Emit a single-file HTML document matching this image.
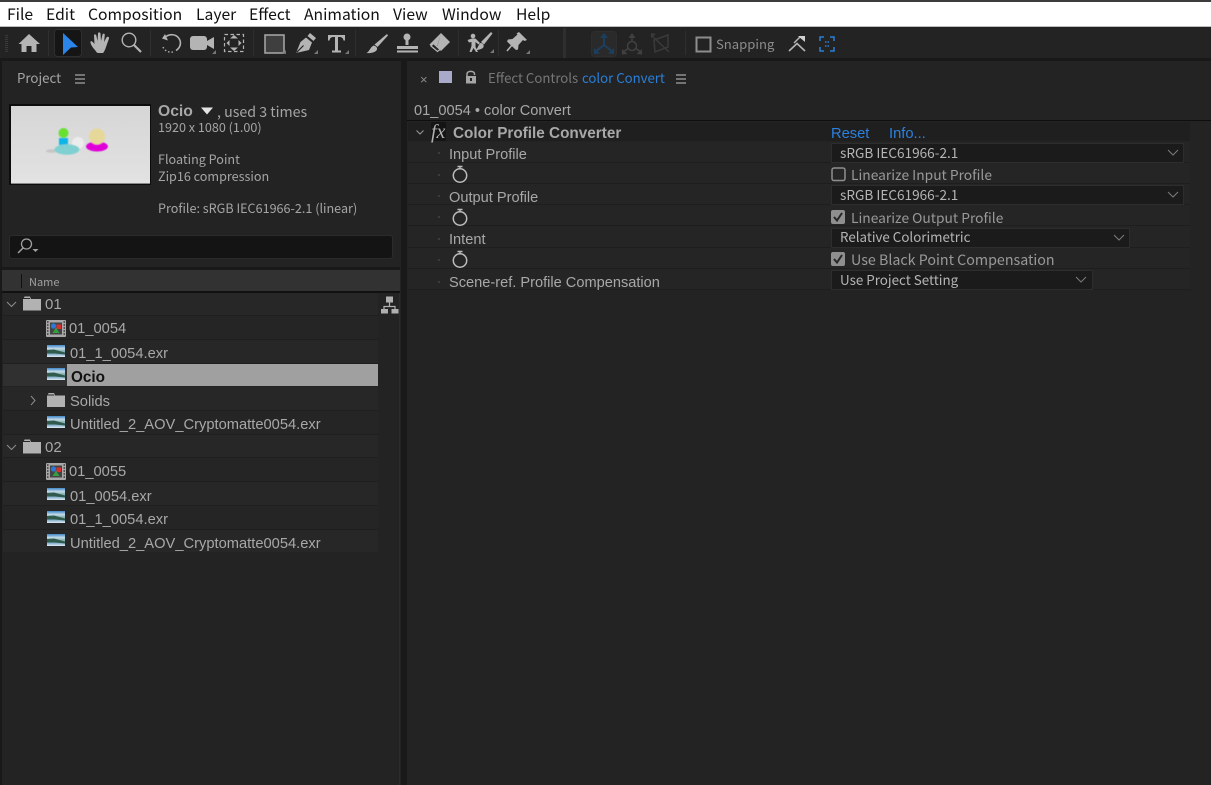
<!DOCTYPE html>
<html><head><meta charset="utf-8"><style>
html,body{margin:0;padding:0;background:#232323;width:1211px;height:785px;overflow:hidden}
div,span{position:absolute;white-space:nowrap}
.n{font-family:"Noto Sans CJK SC","Liberation Sans",sans-serif}
.l{font-family:"Liberation Sans","Noto Sans CJK SC",sans-serif}
.m{top:1px;height:24px;line-height:25px;font-size:15.7px;color:#111;font-family:"Noto Sans CJK SC","Liberation Sans",sans-serif}
.i{font-size:12.6px;color:#a5a5a5;height:16px;line-height:16px;font-family:"Noto Sans CJK SC","Liberation Sans",sans-serif}
.r{left:3px;width:375px;background:#272727;border-bottom:1px solid #1f1f1f}
.t{font-family:"Liberation Sans",sans-serif;font-size:14.7px;color:#a8a8a8;height:20px;line-height:20px}
.e{left:408px;width:782px;background:#252525;border-bottom:1px solid #1e1e1e}
.p{left:449px;font-family:"Liberation Sans",sans-serif;font-size:14.6px;color:#a8a8a8;height:20px;line-height:20px}
.d{left:831px;background:#1b1b1b;border:1px solid #2d2d2d;box-sizing:border-box;height:20px}
.dt{left:840px;font-family:"Noto Sans CJK SC","Liberation Sans",sans-serif;font-size:13.6px;color:#b5b5b5;height:18px;line-height:18px}
.c{left:851px;font-family:"Noto Sans CJK SC","Liberation Sans",sans-serif;font-size:13.8px;color:#999;height:20px;line-height:20px}
</style></head><body>
<div style="left:0;top:0;width:1211px;height:2px;background:#3c3c3c"></div>
<div style="left:0;top:2px;width:1211px;height:24px;background:#fff"></div>
<div style="left:0;top:26px;width:1211px;height:1px;background:#bdbdbd"></div>
<div style="left:0;top:27px;width:1211px;height:31px;background:#232323"></div>
<div style="left:0;top:58px;width:1211px;height:3px;background:#191919"></div>
<div style="left:0;top:61px;width:2px;height:724px;background:#191919"></div>
<div style="left:401px;top:61px;width:6px;height:724px;background:#191919"></div>

<span class="m" style="left:7px">File</span>
<span class="m" style="left:46px">Edit</span>
<span class="m" style="left:88px">Composition</span>
<span class="m" style="left:196px">Layer</span>
<span class="m" style="left:249px">Effect</span>
<span class="m" style="left:304px">Animation</span>
<span class="m" style="left:393px">View</span>
<span class="m" style="left:442px">Window</span>
<span class="m" style="left:516px">Help</span>

<!-- project -->
<span class="n" style="left:17px;top:68px;font-size:13.3px;line-height:20px;color:#a5a5a5">Project</span>
<span class="l" style="left:158px;top:103px;font-size:15.7px;line-height:18px;font-weight:bold;color:#a8a8a8">Ocio</span>
<span class="n" style="left:217px;top:103px;font-size:14.2px;line-height:18px;color:#a5a5a5">, used 3 times</span>
<span class="i" style="left:158px;top:119px">1920 x 1080 (1.00)</span>
<span class="i" style="left:158px;top:151px">Floating Point</span>
<span class="i" style="left:158px;top:168px">Zip16 compression</span>
<span class="i" style="left:158px;top:200px">Profile: sRGB IEC61966-2.1 (linear)</span>

<div style="left:9px;top:235px;width:384px;height:24px;background:#141414;border:1px solid #2b2b2b;border-radius:3px;box-sizing:border-box"></div>
<div style="left:2px;top:267px;width:398px;height:3px;background:#191919"></div>
<div style="left:2px;top:270px;width:398px;height:21px;background:#323232"></div>
<div style="left:2px;top:291px;width:398px;height:2px;background:#111"></div>
<div style="left:21px;top:274px;width:1px;height:14px;background:#111"></div>
<span class="n" style="left:29px;top:274px;font-size:11px;line-height:16px;color:#a0a0a0">Name</span>

<div class="r" style="top:293px;height:22px"></div>
<div class="r" style="top:316px;height:23px;background:#252525"></div>
<div class="r" style="top:340px;height:23px"></div>
<div style="left:3px;top:364px;width:64px;height:22px;background:#303030"></div>
<div style="left:67px;top:364px;width:311px;height:22px;background:#a0a0a0"></div>
<div class="r" style="top:387px;height:23px"></div>
<div class="r" style="top:411px;height:23px;background:#252525"></div>
<div class="r" style="top:435px;height:22px"></div>
<div class="r" style="top:458px;height:23px;background:#252525"></div>
<div class="r" style="top:482px;height:23px"></div>
<div class="r" style="top:506px;height:23px;background:#252525"></div>
<div class="r" style="top:530px;height:22px;border-bottom:0"></div>
<div style="left:399px;top:293px;width:1px;height:492px;background:#2c2c2c"></div>

<span class="t" style="left:45px;top:295px;font-size:15px">01</span>
<span class="t" style="left:69px;top:319px">01_0054</span>
<span class="t" style="left:70px;top:344px">01_1_0054.exr</span>
<span class="t" style="left:71px;top:368px;font-weight:bold;color:#111;font-size:15.3px">Ocio</span>
<span class="t" style="left:70px;top:392px">Solids</span>
<span class="t" style="left:70px;top:415px">Untitled_2_AOV_Cryptomatte0054.exr</span>
<span class="t" style="left:45px;top:438px;font-size:15px">02</span>
<span class="t" style="left:69px;top:462px">01_0055</span>
<span class="t" style="left:70px;top:487px">01_0054.exr</span>
<span class="t" style="left:70px;top:510px">01_1_0054.exr</span>
<span class="t" style="left:70px;top:534px">Untitled_2_AOV_Cryptomatte0054.exr</span>

<!-- effect controls header -->
<span style="left:420px;top:72px;font:13px/15px 'Liberation Sans',sans-serif;color:#8a8a8a">×</span>
<div style="left:439px;top:71px;width:13px;height:12px;background:#a9a9c9"></div>
<span class="n" style="left:488px;top:68px;font-size:13.2px;line-height:20px;color:#777">Effect Controls</span>
<span class="n" style="left:582px;top:68px;font-size:13.2px;line-height:20px;color:#2a7fd8">color Convert</span>
<span class="l" style="left:414px;top:102px;font-size:14.6px;line-height:18px;color:#a8a8a8">01_0054 • color Convert</span>
<div style="left:407px;top:120px;width:804px;height:1px;background:#0e0e0e"></div>

<div class="e" style="top:122px;height:19px;background:#1f1f1f;border:0"></div>
<div class="e" style="top:142px;height:20px"></div>
<div class="e" style="top:163px;height:20px"></div>
<div class="e" style="top:184px;height:20px"></div>
<div class="e" style="top:205px;height:20px"></div>
<div class="e" style="top:226px;height:21px"></div>
<div class="e" style="top:248px;height:20px"></div>
<div class="e" style="top:269px;height:20px"></div>

<div style="left:431px;top:122px;width:15px;height:19px;background:#141414"></div>
<span style="left:431px;top:122px;font:italic 20px/20px 'Liberation Serif',serif;color:#b0b0b0">fx</span>
<span class="l" style="left:453px;top:124px;font-size:15.3px;line-height:20px;font-weight:bold;color:#a8a8a8">Color Profile Converter</span>
<span class="l" style="left:831px;top:124px;font-size:14.7px;line-height:20px;color:#2b80e0">Reset</span>
<span class="l" style="left:889px;top:124px;font-size:14.7px;line-height:20px;color:#2b80e0">Info...</span>

<span class="p" style="top:145px">Input Profile</span>
<span class="p" style="top:188px">Output Profile</span>
<span class="p" style="top:230px">Intent</span>
<span class="p" style="top:273px">Scene-ref. Profile Compensation</span>

<div class="d" style="top:143px;width:353px"></div><span class="dt" style="top:143px">sRGB IEC61966-2.1</span>
<div class="d" style="top:185px;width:353px"></div><span class="dt" style="top:185px">sRGB IEC61966-2.1</span>
<div class="d" style="top:228px;width:299px"></div><span class="dt" style="top:228px;font-size:13.35px">Relative Colorimetric</span>
<div class="d" style="top:270px;width:262px"></div><span class="dt" style="top:270px;font-size:13.4px">Use Project Setting</span>

<span class="c" style="top:164px">Linearize Input Profile</span>
<span class="c" style="top:207px">Linearize Output Profile</span>
<span class="c" style="top:250px;font-size:14.25px">Use Black Point Compensation</span>

<span class="n" style="left:716px;top:33px;font-size:13.1px;line-height:21px;color:#8c8c8c">Snapping</span>

<svg style="position:absolute;left:0;top:0" width="1211" height="785" viewBox="0 0 1211 785">
<defs>
<linearGradient id="sky" x1="0" y1="0" x2="0" y2="1">
<stop offset="0" stop-color="#3f86c8"/><stop offset=".3" stop-color="#c4dcea"/><stop offset=".5" stop-color="#8ab0b0"/><stop offset=".72" stop-color="#7aa8c8"/><stop offset="1" stop-color="#dfeaf2"/>
</linearGradient>
<linearGradient id="tb" x1="0" y1="0" x2="0" y2="1"><stop offset="0" stop-color="#d6d6d6"/><stop offset="1" stop-color="#e2e2e2"/></linearGradient>
<filter id="bl" x="-20%" y="-20%" width="140%" height="140%"><feGaussianBlur stdDeviation=".4"/></filter>
<symbol id="foot" viewBox="0 0 18 12" width="18" height="12"><rect width="18" height="12" fill="url(#sky)"/><path d="M0 5L7 4.500L18 7.500V9.500L8 8.500H0Z" fill="#2f5a4c"/></symbol>
<symbol id="folder" viewBox="0 0 18 14" width="18" height="14"><path d="M0 2.500V14H18V2.500H8L7 0H1.500L1 1.500H7V2.500Z" fill="#b2b2b2"/></symbol>
<symbol id="comp" viewBox="0 0 20 17" width="20" height="17"><rect width="20" height="17" rx="1" fill="#a8a8a8"/><rect x="4" y="2.500" width="12" height="12" fill="#444"/><path d="M1 2h1.500M1 5h1.500M1 8h1.500M1 11h1.500M1 14h1.500M17.500 2H19M17.500 5H19M17.500 8H19M17.500 11H19M17.500 14H19" stroke="#222" stroke-width="1.200"/><circle cx="7.500" cy="6" r="2.600" fill="#2a78d8"/><rect x="10.500" y="4.500" width="4.500" height="4.500" fill="#d83030"/><path d="M10 7.500L13.500 13H6.500Z" fill="#30a040"/></symbol>
<symbol id="watch" viewBox="0 0 18 19" width="18" height="19"><circle cx="9" cy="10.500" r="6.700" fill="none" stroke="#bcbcbc" stroke-width="1.500"/><path d="M6.500 1.500H11.500M9 1.500V4" stroke="#bcbcbc" stroke-width="1.400"/></symbol>
<symbol id="cb" viewBox="0 0 14 14" width="14" height="14"><rect width="14" height="14" rx="2" fill="#8f8f8f"/></symbol>
</defs>

<!-- grip -->
<path d="M6.500 35V52" stroke="#3a3a3a" stroke-width="3" stroke-dasharray="1 1"/>
<!-- separators -->
<g fill="#2f2f2f"><rect x="48" y="30" width="1" height="26"/><rect x="150" y="30" width="1" height="26"/><rect x="253" y="30" width="1" height="26"/><rect x="355" y="30" width="1" height="26"/><rect x="458" y="30" width="1" height="26"/><rect x="498" y="30" width="1" height="26"/><rect x="563" y="28" width="3" height="30"/><rect x="685" y="31" width="1" height="24"/></g>
<!-- home -->
<path d="M29 34L40 44H36.500V52H31.500V46H26.500V52H21.500V44H18.500Z" fill="#b4b4b4"/>
<!-- selection -->
<rect x="54.500" y="29.500" width="27" height="27" rx="3" fill="#151515" stroke="#2f2f2f"/>
<path d="M63 33L78 47L71 47.500L63 55Z" fill="#2b85e8"/>
<!-- hand -->
<path d="M95 50C92 47 90 43 90.500 41.500C91.500 40.500 93 42 94.500 44L94 35.500C94 34 96 34 96.300 35.500L97.500 41L98 33.500C98 32 100.300 32 100.500 33.500L101 41L102.500 34.500C103 33 105 33.500 104.800 35L104 42L106.500 37.500C107.500 36 109.500 37 109 38.500L106 47C105 50 104 52 103 53H98C97 53 96 51.500 95 50Z" fill="#b4b4b4"/>
<!-- zoom -->
<circle cx="129" cy="40" r="6.800" fill="none" stroke="#b4b4b4" stroke-width="1.400"/><path d="M134 45L141 52" stroke="#b4b4b4" stroke-width="2.200"/>
<!-- rotate -->
<path d="M165 34L162 38.500L168 40.500Z" fill="#b4b4b4"/><path d="M165 37.500C169 33.500 176 33.800 179 38.500C182 43 180 48 176 50.500" fill="none" stroke="#b4b4b4" stroke-width="1.600"/><path d="M173 52C168 53 164 50 162.500 46" fill="none" stroke="#b4b4b4" stroke-width="1.400" stroke-dasharray="1.500 2"/>
<!-- camera -->
<rect x="190" y="36" width="17" height="14" rx="3" fill="#b4b4b4"/><path d="M207 41L214 37V49L207 45Z" fill="#b4b4b4"/><path d="M216 50V54H212Z" fill="#777"/>
<!-- pan behind -->
<rect x="224.500" y="34.500" width="19" height="17" fill="none" stroke="#b4b4b4" stroke-width="1.200" stroke-dasharray="3.500 2.500"/><path d="M234 35L238 38.500H230ZM234 51L238 47.500H230ZM226.500 43L229.500 40V46ZM241.500 43L238.500 40V46Z" fill="#b4b4b4"/>
<!-- rect -->
<rect x="265" y="35" width="19" height="18" fill="#3f3f3f" stroke="#aaa" stroke-width="1.500"/><path d="M286 50V54H282Z" fill="#777"/>
<!-- pen -->
<path d="M310 33L316 38L313.500 41L307.500 36Z" fill="#b4b4b4"/><path d="M306 37.500L312 42.500L309 50L296 53L300.500 42Z" fill="#b4b4b4"/><path d="M296.500 52.500L303.500 45.500" stroke="#232323" stroke-width="1.200"/><path d="M318 50V54H314Z" fill="#777"/>
<!-- type -->
<path d="M328 35H345V40.500H343.500C343 38 342 37 339.500 37H338V50.500H341V52.500H332V50.500H335V37H333.500C331 37 330 38 329.500 40.500H328Z" fill="#b4b4b4"/><path d="M349 50V54H345Z" fill="#777"/>
<!-- brush -->
<path d="M387 34L388 35.500L377.500 47L374.500 44.500Z" fill="#b4b4b4"/><path d="M373.500 45.500C376 46 377.500 47.500 377 49.500C376 52.500 370 53.500 366.500 53C369.500 51.500 370 47.500 373.500 45.500Z" fill="#b4b4b4"/>
<!-- stamp -->
<circle cx="407" cy="37" r="3.500" fill="#b4b4b4"/><rect x="405.500" y="39" width="3" height="6" fill="#b4b4b4"/><path d="M397 46H418V49H397Z" fill="#b4b4b4"/><rect x="397" y="50.500" width="21" height="2" fill="#b4b4b4"/>
<!-- eraser -->
<path d="M441 33L450 42L441 51L437 47Z M441 33L429.500 44.500L433.500 49L437.500 46Z" fill="#b4b4b4"/><path d="M431 46L437.500 51.500L440 49.500L433.500 43.500Z" fill="#232323" stroke="#b4b4b4" stroke-width="1.200"/>
<!-- roto -->
<circle cx="473" cy="36" r="2.300" fill="#b4b4b4"/><path d="M467.500 40L472 38.500H475.500L480 43L478.500 44.500L475.500 42V47L478 52H476L473.500 48L471.500 52H469.500L471.500 46V42L469 42.500Z" fill="#b4b4b4"/><path d="M491 32L492.500 33.500L484 44.500L481 42Z" fill="#b4b4b4"/><path d="M480.500 43C483 43 484 45 483.500 47C482.500 49 478.500 50 475.500 50C478 48.500 478 45 480.500 43Z" fill="#b4b4b4"/><path d="M494 49V53H490Z" fill="#777"/>
<!-- pin -->
<path d="M519 32L527 40L524.500 41L523 40L518.500 45L518 49.500L516 50L507 41.500L508 39.500L512.500 39L517.500 34.500L516.500 33.500Z" fill="#b4b4b4"/><path d="M512 45L507 51" stroke="#b4b4b4" stroke-width="1.500"/><path d="M530 50V54H526Z" fill="#777"/>
<!-- axis -->
<rect x="591.500" y="31.500" width="25" height="25" rx="3" fill="#2a2a2a" stroke="#2e2e2e"/>
<g stroke="#1c3f60" stroke-width="2" fill="none"><path d="M604 36V45M604 45L595 52M604 45L613 52"/></g><path d="M604 33L608 38H600ZM594 48L594 54L600 53.500ZM614 48L614 54L608 53.500Z" fill="#1c3f60"/>
<g stroke="#404040" stroke-width="1.500" fill="none"><circle cx="632" cy="46" r="4.500"/><path d="M632 36V41M622 53L628 48.500M642 53L636 48.500"/></g><path d="M632 33L635.500 38H628.500ZM622 49V54.500L627.500 54ZM642 49V54.500L636.500 54Z" fill="#404040"/>
<g stroke="#3a3a3a" stroke-width="1.500" fill="none"><path d="M654 40L668 35V47L655 52Z"/><path d="M651 35L669 52"/></g><path d="M651 33L656 34L651 38Z" fill="#3a3a3a"/>
<!-- snapping -->
<rect x="696.500" y="37.500" width="14" height="14" fill="none" stroke="#8d8d8d" stroke-width="2"/>
<path d="M789 51L797 43.500L805 51" fill="none" stroke="#b4b4b4" stroke-width="1.600"/><path d="M794 43L800 37" stroke="#b4b4b4" stroke-width="1.500"/><path d="M798 36H805V42Z" fill="#d0d0d0"/>
<g fill="none" stroke="#2b7fd8" stroke-width="1.500"><path d="M820 41V37H824M830 37H834V41M820 47V51H824M830 51H834V47"/><path d="M825 42H826.500M829 42H827.500M825 46H826.500M829 46H827.500"/></g>

<!-- menu icons -->
<path d="M75 75H85M75 79H85M75 83H85" stroke="#a5a5a5" stroke-width="1.300"/>
<path d="M676 75H686M676 79H686M676 83H686" stroke="#a5a5a5" stroke-width="1.300"/>
<!-- lock -->
<path d="M467 76V74C467 70.500 474.500 70.500 474.500 74V75" fill="none" stroke="#a5a5a5" stroke-width="1.500"/><rect x="466" y="76" width="10" height="7.500" fill="#a5a5a5"/><rect x="470" y="78" width="2" height="3" fill="#232323"/>

<!-- thumbnail -->
<rect x="9" y="104" width="142" height="81" fill="#0c0c0c"/>
<rect x="11" y="106" width="139" height="77" fill="url(#tb)"/><rect x="11" y="183" width="139" height="1" fill="#888"/>
<g filter="url(#bl)">
<ellipse cx="52" cy="151" rx="6" ry="1.800" fill="#bbb" opacity=".7"/>
<ellipse cx="78" cy="143" rx="6" ry="6" fill="#ececec"/>
<rect x="59" y="138" width="9" height="7" fill="#10b4e8"/>
<circle cx="63.500" cy="133" r="5" fill="#68e030"/>
<ellipse cx="67" cy="149.500" rx="12.500" ry="5.300" fill="#80d0d2"/>
<ellipse cx="97" cy="146.500" rx="11" ry="5" fill="#e000d8"/>
<circle cx="97" cy="136.500" r="8" fill="#e6d898"/>
</g>
<!-- Ocio caret -->
<path d="M201 107.500H213L207 114.500Z" fill="#e4e4e4"/>
<!-- search icon -->
<circle cx="26.500" cy="244" r="5" fill="none" stroke="#a0a0a0" stroke-width="1.300"/><path d="M23 248L18 253" stroke="#a0a0a0" stroke-width="1.500"/><path d="M32.500 249H38.500L35.500 252Z" fill="#a0a0a0"/>

<!-- project chevrons -->
<path d="M7 302L11.500 306.500L16 302" fill="none" stroke="#8d8d8d" stroke-width="1"/>
<path d="M7 445L11.500 449.500L16 445" fill="none" stroke="#8d8d8d" stroke-width="1"/>
<path d="M31 396L35 400.500L31 405" fill="none" stroke="#8d8d8d" stroke-width="1"/>
<use href="#folder" x="23" y="296.500"/><use href="#folder" x="23" y="439.500"/><use href="#folder" x="47" y="393"/>
<use href="#comp" x="46" y="320"/><use href="#comp" x="46" y="463"/>
<use href="#foot" x="47" y="345"/><use href="#foot" x="47" y="368"/><use href="#foot" x="47" y="416"/><use href="#foot" x="47" y="488"/><use href="#foot" x="47" y="511"/><use href="#foot" x="47" y="534"/>
<!-- hierarchy icon -->
<rect x="386" y="296.500" width="7" height="6" fill="#b0b0b0"/><path d="M389.500 302V306M384 310V306.500H395V310" fill="none" stroke="#b0b0b0" stroke-width="1.200"/><rect x="381" y="309" width="7" height="4.500" fill="#b0b0b0"/><rect x="391.500" y="309" width="7" height="4.500" fill="#b0b0b0"/>

<!-- effect panel -->
<path d="M416.500 130.500L420 134L423.500 130.500" fill="none" stroke="#999" stroke-width="1"/>
<g fill="#3c3c3c"><rect x="438" y="152" width="2" height="2"/><rect x="438" y="174" width="2" height="2"/><rect x="438" y="195" width="2" height="2"/><rect x="438" y="216" width="2" height="2"/><rect x="438" y="238" width="2" height="2"/><rect x="438" y="259" width="2" height="2"/><rect x="438" y="281" width="2" height="2"/></g>
<use href="#watch" x="451" y="165"/><use href="#watch" x="451" y="208"/><use href="#watch" x="451" y="250"/>
<g fill="none" stroke="#7c7c7c" stroke-width="1"><path d="M1168 150L1173 155L1178 150"/><path d="M1168 192L1173 197L1178 192"/><path d="M1114 235L1119 240L1124 235"/><path d="M1076 277L1081 282L1086 277"/></g>
<!-- checkboxes -->
<rect x="832" y="168" width="13" height="12.500" rx="2" fill="#262626" stroke="#8f8f8f" stroke-width="1.500"/>
<use href="#cb" x="831" y="210"/><use href="#cb" x="831" y="252"/>
<path d="M834 217L837 220.500L842 213M834 259L837 262.500L842 255" fill="none" stroke="#262626" stroke-width="2"/>
</svg>
</body></html>
